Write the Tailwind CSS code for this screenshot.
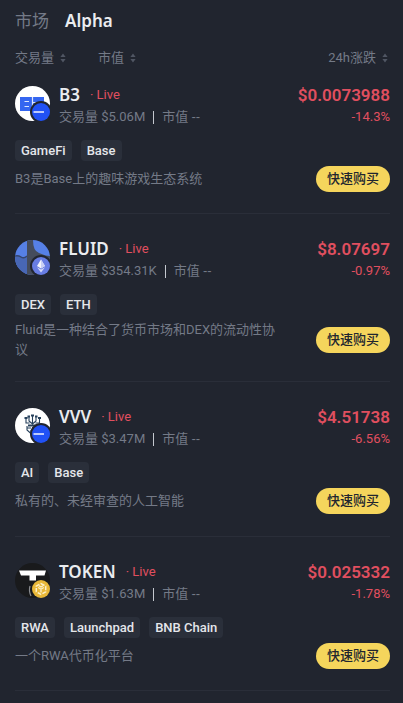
<!DOCTYPE html>
<html lang="zh-CN">
<head>
  <meta charset="UTF-8" />
  <meta name="viewport" content="width=device-width, initial-scale=1.0"/>
  <title>Alpha</title>
  <script src="https://cdn.jsdelivr.net/npm/@tailwindcss/browser@4"></script>
</head>
<body class="bg-[#21252f] min-h-screen pl-[15px] pr-[13px] font-['Roboto','Noto_Sans_CJK_SC',sans-serif] text-[13px] leading-5 text-[#747a87]">
  <svg class="hidden">
    <symbol id="sort" viewBox="0 0 6 10">
      <path d="M3 0.5 5.6 3.9H0.4Z M3 9.5 0.4 6.1H5.6Z" fill="#505663"/>
    </symbol>
    <symbol id="base" viewBox="0 0 22 22">
      <circle cx="11" cy="11" r="11" fill="#21252f"/>
      <circle cx="11" cy="11" r="9" fill="#2151f5"/>
      <path d="M3.500 11H14" stroke="#fff" stroke-width="1.4"/>
    </symbol>
  </svg>

  <nav class="flex items-center gap-4 pt-[9px] text-[17px] leading-6">
    <a href="#">市场</a>
    <a href="#" class="font-['Noto_Sans','Noto_Sans_CJK_SC',sans-serif] font-semibold text-[#eaecef]">Alpha</a>
  </nav>

  <div class="flex items-center pt-[15px]">
    <button class="flex items-center gap-[6px] mr-8">交易量 <svg class="w-[6px] h-[10px]"><use href="#sort"/></svg></button>
    <button class="flex items-center gap-[6px]">市值 <svg class="w-[6px] h-[10px]"><use href="#sort"/></svg></button>
    <button class="flex items-center gap-[6px] ml-auto mr-[2px]">24h涨跌 <svg class="w-[6px] h-[10px]"><use href="#sort"/></svg></button>
  </div>

  <main>
    <article class="pt-[18px] pb-[21px] border-b border-[#2a2e39]">
      <div class="flex items-start">
        <svg class="w-[36px] h-[36px] shrink-0" viewBox="0 0 36 36">
          <circle cx="17.5" cy="17.5" r="17.5" fill="#fff"/>
          <path d="M5 11H29V25H5Z" fill="#3566f0"/>
          <path d="M17.5 11V25M9.5 15.5H14M9.5 20.5H14M17.5 16.5H23" stroke="#dce6ff" stroke-width="1.2"/>
          <use href="#base" x="15" y="15" width="22" height="22"/>
        </svg>
        <div class="ml-2">
          <div class="flex items-center gap-[10px] h-[18px]">
            <h2 class="font-['Noto_Sans',sans-serif] font-semibold text-[17px] text-[#eaecef]">B3</h2>
            <span class="text-[#e04f5f]">· Live</span>
          </div>
          <div class="flex items-center gap-2 mt-[3px]"><span>交易量 $5.06M</span><i class="w-px h-[13px] bg-[#c4c8cf]"></i><span>市值 <span class="font-['Liberation_Sans',sans-serif]">--</span></span></div>
        </div>
        <div class="ml-auto text-right text-[#e04f5f]">
          <div class="leading-[18px] text-[17px] font-semibold">$0.0073988</div>
          <div class="mt-[3px]">-14.3%</div>
        </div>
      </div>
      <ul class="flex gap-[9px] mt-[13px] font-medium text-[#e4e6ea]">
        <li class="bg-[#2a2f3a] rounded px-[6px] leading-[21px]">GameFi</li>
        <li class="bg-[#2a2f3a] rounded px-[6px] leading-[21px]">Base</li>
      </ul>
      <div class="flex items-center justify-between gap-9 mt-[5px]">
        <p>B3是Base上的趣味游戏生态系统</p>
        <button class="shrink-0 w-[74px] h-[26px] rounded-full bg-[#f5d55c] font-medium text-[#21252f]">快速购买</button>
      </div>
    </article>

    <article class="pt-[26px] pb-[21px] border-b border-[#2a2e39]">
      <div class="flex items-start">
        <svg class="w-[36px] h-[36px] shrink-0" viewBox="0 0 36 36">
          <defs><clipPath id="fluid"><circle cx="17.5" cy="17.5" r="17.5"/></clipPath></defs>
          <g clip-path="url(#fluid)">
            <path d="M0 0H36V36H0Z" fill="#5680e6"/>
            <path d="M0 16Q3 15 6 17T12 16V36H0Z" fill="#4867b5"/>
            <path d="M0 16Q3 15 6 17T12 16" fill="none" stroke="#35466f" stroke-width="1.5"/>
            <path d="M12 0H18Q18 11 24 13Q30 16 36 16V36H12Z" fill="#454c5c"/>
          </g>
          <circle cx="26" cy="26" r="11" fill="#21252f"/>
          <circle cx="26" cy="26" r="9" fill="#687de3"/>
          <path d="M26 19.5 30 26 26 28.5 22 26Z" fill="#f3f4fc"/>
          <path d="M22 27.2 26 29.6 30 27.2 26 32.5Z" fill="#d5daf7"/>
          <path d="M26 19.5 30 26 26 28.5Z" fill="#c9d0f5"/>
        </svg>
        <div class="ml-2">
          <div class="flex items-center gap-[10px] h-[18px]">
            <h2 class="font-['Noto_Sans',sans-serif] font-semibold text-[17px] text-[#eaecef]">FLUID</h2>
            <span class="text-[#e04f5f]">· Live</span>
          </div>
          <div class="flex items-center gap-2 mt-[3px]"><span>交易量 $354.31K</span><i class="w-px h-[13px] bg-[#c4c8cf]"></i><span>市值 <span class="font-['Liberation_Sans',sans-serif]">--</span></span></div>
        </div>
        <div class="ml-auto text-right text-[#e04f5f]">
          <div class="leading-[18px] text-[17px] font-semibold">$8.07697</div>
          <div class="mt-[3px]">-0.97%</div>
        </div>
      </div>
      <ul class="flex gap-[9px] mt-[13px] font-medium text-[#e4e6ea]">
        <li class="bg-[#2a2f3a] rounded px-[6px] leading-[21px]">DEX</li>
        <li class="bg-[#2a2f3a] rounded px-[6px] leading-[21px]">ETH</li>
      </ul>
      <div class="flex items-center justify-between gap-9 mt-[5px]">
        <p>Fluid是一种结合了货币市场和DEX的流动性协议</p>
        <button class="shrink-0 w-[74px] h-[26px] rounded-full bg-[#f5d55c] font-medium text-[#21252f]">快速购买</button>
      </div>
    </article>

    <article class="pt-[26px] pb-[22px] border-b border-[#2a2e39]">
      <div class="flex items-start">
        <svg class="w-[36px] h-[36px] shrink-0" viewBox="0 0 36 36">
          <circle cx="17.5" cy="17.5" r="17.5" fill="#fff"/>
          <path d="M11 11V15H14.500M14 9V13L17.500 16V8M21 9V13L17.500 16M24.500 11V15H20.500M12 18V22L17.500 27V19M12 20H16M23 18V22M15 23H20" fill="none" stroke="#27415c" stroke-width="1.1"/>
          <path d="M9.500 10H12.500M12.500 8.500H15M16 7.500H19M20 8.500H22.500M23 10H26M13 17.500H22.500" stroke="#27415c" stroke-width="2"/>
          <use href="#base" x="15" y="15" width="22" height="22"/>
        </svg>
        <div class="ml-2">
          <div class="flex items-center gap-[10px] h-[18px]">
            <h2 class="font-['Noto_Sans',sans-serif] font-semibold text-[17px] text-[#eaecef]">VVV</h2>
            <span class="text-[#e04f5f]">· Live</span>
          </div>
          <div class="flex items-center gap-2 mt-[3px]"><span>交易量 $3.47M</span><i class="w-px h-[13px] bg-[#c4c8cf]"></i><span>市值 <span class="font-['Liberation_Sans',sans-serif]">--</span></span></div>
        </div>
        <div class="ml-auto text-right text-[#e04f5f]">
          <div class="leading-[18px] text-[17px] font-semibold">$4.51738</div>
          <div class="mt-[3px]">-6.56%</div>
        </div>
      </div>
      <ul class="flex gap-[9px] mt-[13px] font-medium text-[#e4e6ea]">
        <li class="bg-[#2a2f3a] rounded px-[6px] leading-[21px]">AI</li>
        <li class="bg-[#2a2f3a] rounded px-[6px] leading-[21px]">Base</li>
      </ul>
      <div class="flex items-center justify-between gap-9 mt-[5px]">
        <p>私有的、未经审查的人工智能</p>
        <button class="shrink-0 w-[74px] h-[26px] rounded-full bg-[#f5d55c] font-medium text-[#21252f]">快速购买</button>
      </div>
    </article>

    <article class="pt-[26px] pb-[21px] border-b border-[#2a2e39]">
      <div class="flex items-start">
        <svg class="w-[36px] h-[36px] shrink-0" viewBox="0 0 36 36">
          <circle cx="17.5" cy="17.5" r="17.5" fill="#191a1c"/>
          <path d="M4 7.5H31L29.5 12.5H21V17.5H14.5V12.5H6Z" fill="#fff"/>
          <path d="M15 23Q13.500 28 16 33" fill="none" stroke="#8b8d91" stroke-width="1.2"/>
          <circle cx="26" cy="26" r="9" fill="#e9b838"/>
          <path d="M26 20.5 30.700 23.200V28.800L26 31.500 21.300 28.800V23.200Z" fill="none" stroke="#fdf1cb" stroke-width="1.5" stroke-dasharray="4 1.4"/>
          <path d="M23.200 24.500 26 26.200 28.800 24.500M26 26.200V29.500M24 22.800 26 24 28 22.800" fill="none" stroke="#fdf1cb" stroke-width="1.3"/>
        </svg>
        <div class="ml-2">
          <div class="flex items-center gap-[10px] h-[18px]">
            <h2 class="font-['Noto_Sans',sans-serif] font-semibold text-[17px] text-[#eaecef]">TOKEN</h2>
            <span class="text-[#e04f5f]">· Live</span>
          </div>
          <div class="flex items-center gap-2 mt-[3px]"><span>交易量 $1.63M</span><i class="w-px h-[13px] bg-[#c4c8cf]"></i><span>市值 <span class="font-['Liberation_Sans',sans-serif]">--</span></span></div>
        </div>
        <div class="ml-auto text-right text-[#e04f5f]">
          <div class="leading-[18px] text-[17px] font-semibold">$0.025332</div>
          <div class="mt-[3px]">-1.78%</div>
        </div>
      </div>
      <ul class="flex gap-[9px] mt-[13px] font-medium text-[#e4e6ea]">
        <li class="bg-[#2a2f3a] rounded px-[6px] leading-[21px]">RWA</li>
        <li class="bg-[#2a2f3a] rounded px-[6px] leading-[21px]">Launchpad</li>
        <li class="bg-[#2a2f3a] rounded px-[6px] leading-[21px]">BNB Chain</li>
      </ul>
      <div class="flex items-center justify-between gap-9 mt-[5px]">
        <p>一个RWA代币化平台</p>
        <button class="shrink-0 w-[74px] h-[26px] rounded-full bg-[#f5d55c] font-medium text-[#21252f]">快速购买</button>
      </div>
    </article>
  </main>
</body>
</html>
